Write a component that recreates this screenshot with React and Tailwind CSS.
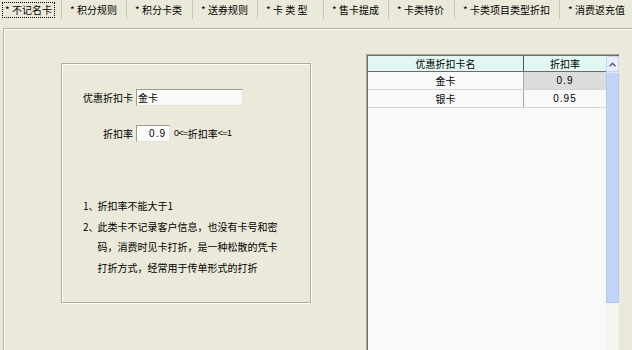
import React from "react";

const tabs = [
  { label: "* 不记名卡", w: "w-[62px]", active: true },
  { label: "* 积分规则", w: "w-[65px]" },
  { label: "* 积分卡类", w: "w-[66px]" },
  { label: "* 送券规则", w: "w-[65px]" },
  { label: "* 卡 类 型", w: "w-[66px]" },
  { label: "* 售卡提成", w: "w-[65px]" },
  { label: "* 卡类特价", w: "w-[66px]" },
  { label: "* 卡类项目类型折扣", w: "w-[105px]" },
  { label: "* 消费返充值", w: "w-[80px]" },
];

const font = "font-['Noto_Sans_CJK_SC','Noto_Sans',sans-serif]";

function Num({ n }) {
  return <span className="w-[15.5px] shrink-0 pl-[1px]">{n}、</span>;
}

export default function App() {
  return (
    <div className={`w-[632px] h-[350px] overflow-hidden bg-[#ebe9d9] text-[10px] text-black ${font} flex flex-col`}>
      {/* Tabs */}
      <div className="h-[20px] flex shrink-0">
        {tabs.map((t, i) => (
          <div
            key={i}
            className={`${t.w} shrink-0 h-[19px] flex items-center border-r border-[#c9c6b4] ${i === 0 ? "pl-[2px]" : "pl-[8px]"}`}
          >
            {t.active ? (
              <span className="border border-dotted border-black h-[16px] px-[2px] leading-[14px] whitespace-nowrap">
                {t.label}
              </span>
            ) : (
              <span className="whitespace-nowrap leading-[14px]">{t.label}</span>
            )}
          </div>
        ))}
      </div>

      {/* Page panel */}
      <div className="mt-[8px] ml-[3px] flex-1 border-l border-t border-[#b7b4a4]">
        <div className="h-full border-l border-t border-[#fbfaf5] flex items-start">
          {/* Group box */}
          <div className="ml-[56px] mt-[33px] w-[250px] h-[240px] border border-[#b0ad9f] shadow-[1px_1px_0_#ffffff,inset_1px_1px_0_#ffffff]">
            <div className="mt-[25px] flex items-center">
              <div className="w-[72px] text-right pr-[1px] whitespace-nowrap">优惠折扣卡</div>
              <div className="ml-[2px] w-[107px] h-[17px] border border-[#9d9b8e] border-r-[#e4e2d6] border-b-[#e4e2d6] bg-[#fafafa] pl-[1px] leading-[15px]">
                金卡
              </div>
            </div>
            <div className="mt-[19px] flex items-center">
              <div className="w-[72px] text-right pr-[1px] whitespace-nowrap">折扣率</div>
              <div className="ml-[2px] w-[34px] h-[17px] border border-[#9d9b8e] border-r-[#e4e2d6] border-b-[#e4e2d6] bg-[#fafafa] pr-[3px] leading-[15px] text-right font-['Liberation_Sans',sans-serif] tracking-[1px]">
                0.9
              </div>
              <div className="ml-[4px] whitespace-nowrap flex items-center">
                <span className="font-['Liberation_Sans',sans-serif] text-[9px] tracking-[-0.6px]">0&lt;=</span>
                <span>折扣率</span>
                <span className="font-['Liberation_Sans',sans-serif] text-[9px] tracking-[-0.6px]">&lt;=1</span>
              </div>
            </div>
            <div className="mt-[54px] pl-[20px] leading-[20.7px] whitespace-nowrap">
              <div className="flex">
                <Num n="1" />
                <span>折扣率不能大于1</span>
              </div>
              <div className="flex">
                <Num n="2" />
                <div>
                  <div>此类卡不记录客户信息，也没有卡号和密</div>
                  <div>码，消费时见卡打折，是一种松散的凭卡</div>
                  <div>打折方式，经常用于传单形式的打折</div>
                </div>
              </div>
            </div>
          </div>

          {/* Grid */}
          <div className="ml-[55px] mt-[24px] w-[253px] self-stretch border-l border-t border-[#aaa797]">
            <div className="h-full border-l border-t border-[#6f6d61] bg-[#f9f9f9] flex">
              <div className="w-[238px] shrink-0">
                <div className="flex h-[16px] bg-[#e1f7f3] border-b border-[#6a6a6a] leading-[15px]">
                  <div className="w-[156px] text-center border-r border-[#555555]">优惠折扣卡名</div>
                  <div className="flex-1 text-center">折扣率</div>
                </div>
                <div className="flex h-[18px] border-b border-[#d6d6d6] leading-[17px]">
                  <div className="w-[156px] text-center border-r border-[#a9a9a9] bg-[#f9f9f9]">金卡</div>
                  <div className="flex-1 text-center bg-[#dcdcdc] font-['Liberation_Sans',sans-serif] tracking-[1px]">0.9</div>
                </div>
                <div className="flex h-[18px] border-b border-[#d6d6d6] leading-[17px]">
                  <div className="w-[156px] text-center border-r border-[#a9a9a9]">银卡</div>
                  <div className="flex-1 text-center font-['Liberation_Sans',sans-serif] tracking-[1px]">0.95</div>
                </div>
              </div>
              <div className="w-[13px] shrink-0 flex flex-col bg-[#f6f6f1]">
                <div className="h-[16px] flex items-center justify-center bg-[#e8eefb] border border-[#c7d5f3]">
                  <svg width="7" height="5" viewBox="0 0 7 5">
                    <path d="M0.5 4.2 L3.5 1.2 L6.5 4.2" fill="none" stroke="#4d6185" strokeWidth="1.5" />
                  </svg>
                </div>
                <div className="h-[231px] bg-[#c4d5fc] border border-[#b3c7f5] border-t-[#dfe8fd]" />
              </div>
            </div>
          </div>
        </div>
      </div>
    </div>
  );
}
